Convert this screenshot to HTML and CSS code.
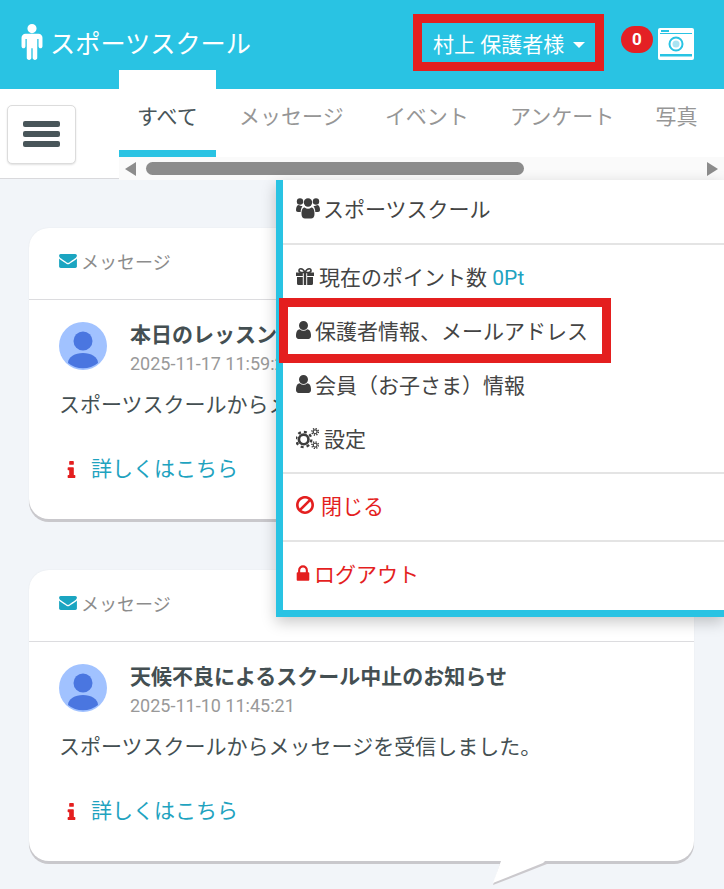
FILE: index.html
```html
<html>
<head>
    <title>スポーツスクール</title>
    <meta charset="utf-8">
    <link rel="stylesheet" href="styles.css">
</head>
<body>
    <svg class="defs" width="0" height="0">
        <symbol id="i-user" viewBox="256 128 1280 1536"><path d="M1536 1399q0 109-62.5 187t-150.5 78h-854q-88 0-150.5-78t-62.5-187q0-85 8.5-160.5t31.5-152 58.5-131 94-89 134.5-34.5q131 128 313 128t313-128q76 0 134.5 34.5t94 89 58.5 131 31.5 152 8.5 160.5zm-256-887q0 159-112.5 271.5t-271.5 112.5-271.5-112.5-112.5-271.5 112.5-271.5 271.5-112.5 271.5 112.5 112.5 271.5z"/></symbol>
        <symbol id="i-mail" viewBox="0 256 1792 1408"><path d="M1792 710v794q0 66-47 113t-113 47h-1472q-66 0-113-47t-47-113v-794q44 49 101 87 362 246 497 345 57 42 92.5 65.5t94.5 48 110 24.5h2q51 0 110-24.5t94.5-48 92.5-65.5q170-123 498-345 57-39 100-87zm0-294q0 79-49 151t-122 123q-376 261-468 325-10 7-42.5 30.5t-54 38-52 32.5-57.5 27-50 9h-2q-23 0-50-9t-57.5-27-52-32.5-54-38-42.5-30.5q-91-64-262-182.5t-205-142.5q-62-42-117-115.5t-55-136.5q0-78 41.5-130t118.5-52h1472q65 0 112.5 47t47.5 113z"/></symbol>
        <symbol id="i-info" viewBox="576 128 640 1408"><path d="M1216 1344v128q0 26-19 45t-45 19h-512q-26 0-45-19t-19-45v-128q0-26 19-45t45-19h64v-384h-64q-26 0-45-19t-19-45v-128q0-26 19-45t45-19h384q26 0 45 19t19 45v576h64q26 0 45 19t19 45zm-128-1152v192q0 26-19 45t-45 19h-256q-26 0-45-19t-19-45v-192q0-26 19-45t45-19h256q26 0 45 19t19 45z"/></symbol>
    </svg>

    <div class="topbar">
        <div class="brand">
            <svg class="brand-icon" viewBox="128 32 1024 1760"><path d="M1152 704v416q0 40-28 68t-68 28-68-28-28-68v-352h-64v912q0 46-33 79t-79 33-79-33-33-79v-464h-64v464q0 46-33 79t-79 33-79-33-33-79v-912h-64v352q0 40-28 68t-68 28-68-28-28-68v-416q0-80 56-136t136-56h640q80 0 136 56t56 136zm-288-448q0 93-65.5 158.5t-158.5 65.5-158.5-65.5-65.5-158.5 65.5-158.5 158.5-65.5 158.5 65.5 65.5 158.5z"/></svg>
            <span>スポーツスクール</span>
        </div>
        <div class="user-btn">村上 保護者様<span class="caret"></span></div>
        <div class="badge">0</div>
        <svg class="camera" viewBox="0 0 36 32">
            <rect x="0" y="0" width="36" height="32" rx="2" fill="#fff"/>
            <rect x="3" y="2" width="8" height="2" fill="#29c3e3"/>
            <rect x="2" y="5" width="32" height="1" fill="#29c3e3"/>
            <circle cx="18" cy="16" r="6.500" fill="none" stroke="#29c3e3" stroke-width="2"/>
            <circle cx="18" cy="16" r="3.500" fill="#a9e4f2"/>
            <rect x="2" y="26" width="32" height="2.500" fill="#29c3e3"/>
        </svg>
    </div>

    <div class="subnav">
        <div class="side">
            <div class="ham"><i></i><i></i><i></i></div>
        </div>
        <div class="tab-area">
            <div class="tabs">
                <a class="tab active">すべて</a>
                <a class="tab">メッセージ</a>
                <a class="tab">イベント</a>
                <a class="tab">アンケート</a>
                <a class="tab">写真</a>
            </div>
            <div class="scroll">
                <span class="arrow left"></span>
                <span class="track"><span class="thumb"></span></span>
                <span class="arrow right"></span>
            </div>
        </div>
    </div>

    <div class="main">
        <div class="card">
            <div class="card-head"><svg class="ic-mail"><use href="#i-mail"/></svg>メッセージ</div>
            <div class="card-body">
                <div class="who">
                    <svg class="avatar" viewBox="0 0 48 48">
                        <circle cx="24" cy="24" r="24" fill="#a1c2ff"/>
                        <circle cx="24" cy="19" r="9.5" fill="#4a76e0"/>
                        <path d="M9 41c0-6 7-10 15-10s15 4 15 10a24 24 0 0 1-30 0z" fill="#4a76e0"/>
                    </svg>
                    <div>
                        <div class="title">本日のレッスンについてのお知らせ</div>
                        <div class="date">2025-11-17 11:59:21</div>
                    </div>
                </div>
                <p class="text">スポーツスクールからメッセージを受信しました。</p>
                <a class="more"><svg class="ic-info"><use href="#i-info"/></svg>詳しくはこちら</a>
            </div>
        </div>
        <div class="card">
            <div class="card-head"><svg class="ic-mail"><use href="#i-mail"/></svg>メッセージ</div>
            <div class="card-body">
                <div class="who">
                    <svg class="avatar" viewBox="0 0 48 48">
                        <circle cx="24" cy="24" r="24" fill="#a1c2ff"/>
                        <circle cx="24" cy="19" r="9.5" fill="#4a76e0"/>
                        <path d="M9 41c0-6 7-10 15-10s15 4 15 10a24 24 0 0 1-30 0z" fill="#4a76e0"/>
                    </svg>
                    <div>
                        <div class="title">天候不良によるスクール中止のお知らせ</div>
                        <div class="date">2025-11-10 11:45:21</div>
                    </div>
                </div>
                <p class="text">スポーツスクールからメッセージを受信しました。</p>
                <a class="more"><svg class="ic-info"><use href="#i-info"/></svg>詳しくはこちら</a>
            </div>
            <svg class="tail" width="60" height="26" viewBox="0 0 60 26">
                <path d="M8 0L0 24L54 3L52 0z" fill="#cbc9cd"/>
                <path d="M8 0L0 22L50 2L52 0z" fill="#fff"/>
            </svg>
        </div>
    </div>

    <div class="menu">
        <div class="group first">
            <div class="row">
                <svg class="ic ic-users" viewBox="0 0 24 22">
                    <circle cx="12" cy="5.500" r="4.200"/><circle cx="4" cy="4.500" r="3.200"/><circle cx="20" cy="4.500" r="3.200"/>
                    <path d="M0 13c0-3 1-5 3-5 1 .8 2 1 3.500 1-1 1.500-1.800 3.500-1.800 6H2c-1.300 0-2-.7-2-2zM24 13c0-3-1-5-3-5-1 .8-2 1-3.500 1 1 1.500 1.800 3.500 1.800 6H22c1.300 0 2-.7 2-2z"/>
                    <path d="M5.500 17c0-4 1-6.500 3.200-6.500 1 .8 2.100 1.200 3.300 1.200s2.300-.4 3.300-1.200c2.200 0 3.200 2.500 3.200 6.500 0 3-1.500 4.500-3.500 4.500H9c-2 0-3.500-1.500-3.500-4.500z"/>
                </svg>
                <span>スポーツスクール</span>
            </div>
        </div>
        <div class="group">
            <div class="row">
                <svg class="ic ic-gift" viewBox="0 0 18 17">
                    <path d="M0 4.500h6.800V8H0zM11.200 4.500H18V8h-6.800zM7.800 4.500h2.400V17H7.800zM1 9h5.800v8H2.500C1.500 17 1 16.300 1 15.500zM11.200 9H17v6.500c0 .8-.5 1.500-1.500 1.500h-4.300z"/>
                    <path class="bow" d="M9 4.500C7.500 1.500 6 .8 4.800.8 3.600.8 3 1.600 3 2.600s1 1.900 2.400 1.900zM9 4.500c1.500-3 3-3.700 4.200-3.700 1.200 0 1.800.8 1.800 1.800s-1 1.900-2.400 1.900z"/>
                </svg>
                <span>現在のポイント数 <b class="pt">0Pt</b></span>
            </div>
            <div class="row marked">
                <svg class="ic ic-user"><use href="#i-user"/></svg>
                <span>保護者情報、メールアドレス</span>
                <div class="mark"></div>
            </div>
            <div class="row">
                <svg class="ic ic-user"><use href="#i-user"/></svg>
                <span>会員（お子さま）情報</span>
            </div>
            <div class="row">
                <svg class="ic ic-cogs" viewBox="0 0 24 22">
                    <circle cx="8" cy="12" r="8" stroke-width="2.400" stroke-dasharray="3.100 3.180"/>
                    <circle cx="8" cy="12" r="5" stroke-width="2.800"/>
                    <circle cx="20" cy="4" r="3.400" stroke-width="1.600" stroke-dasharray="1.300 1.370"/>
                    <circle cx="20" cy="4" r="2" stroke-width="1.200"/>
                    <circle cx="20" cy="18" r="3.400" stroke-width="1.600" stroke-dasharray="1.300 1.370"/>
                    <circle cx="20" cy="18" r="2" stroke-width="1.200"/>
                </svg>
                <span>設定</span>
            </div>
        </div>
        <div class="group thin">
            <div class="row red">
                <svg class="ic ic-ban" viewBox="128 128 1536 1536"><path d="M1440 893q0-161-87-295l-754 753q137 89 297 89 111 0 211.500-43.500t173.500-116.500 116-174.500 43-212.500zm-999 299l755-754q-135-91-300-91-148 0-273 73t-198 199-73 274q0 162 89 299zm1223-299q0 157-61 300t-163.500 246-245 164-298.500 61-298.500-61-245-164-163.500-246-61-300 61-299.500 163.500-245.500 245-164 298.500-61 298.500 61 245 164 163.500 245.500 61 299.500z"/></svg>
                <span>閉じる</span>
            </div>
        </div>
        <div class="group last">
            <div class="row red">
                <svg class="ic ic-lock" viewBox="256 128 1280 1408"><path d="M640 768h512v-192q0-106-75-181t-181-75-181 75-75 181v192zm832 96v576q0 40-28 68t-68 28h-960q-40 0-68-28t-28-68v-576q0-40 28-68t68-28h32v-192q0-184 132-316t316-132 316 132 132 316v192h32q40 0 68 28t28 68z"/></svg>
                <span>ログアウト</span>
            </div>
        </div>
    </div>
</body>
</html>
```

FILE: styles.css
```css
html, body {
    margin: 0;
    padding: 0;
    height: 889px;
    overflow: hidden;
}

body {
    position: relative;
    background-color: #f2f5f9;
    font-family: Roboto, "Noto Sans CJK JP", sans-serif;
    font-size: 21px;
    color: #444f52;
}

.defs {
    display: block;
    height: 0;
}

/* top bar */
.topbar {
    display: flex;
    align-items: flex-start;
    height: 89px;
    background-color: #29c3e3;
    color: #fff;
}

.brand {
    display: flex;
    align-items: center;
    width: 413px;
    height: 89px;
    padding: 0 0 5px 21px;
    box-sizing: border-box;
    font-size: 25.200px;
}

.brand-icon {
    width: 22px;
    height: 36px;
    margin-right: 7px;
    fill: #fff;
}

.user-btn {
    display: flex;
    align-items: center;
    box-sizing: border-box;
    width: 191px;
    height: 57px;
    margin-top: 14px;
    padding-left: 11px;
    border: 9px solid #e41f1f;
    white-space: nowrap;
}

.caret {
    margin: 4px 0 0 9px;
    border-top: 6px solid #fff;
    border-left: 6px solid transparent;
    border-right: 6px solid transparent;
}

.badge {
    width: 32px;
    height: 27px;
    margin: 26px 0 0 17px;
    border-radius: 14px;
    background-color: #e42024;
    font-size: 17px;
    font-weight: bold;
    line-height: 27px;
    text-align: center;
}

.camera {
    width: 36px;
    height: 32px;
    margin: 28px 0 0 5px;
}

/* tabs */
.subnav {
    display: flex;
    align-items: flex-start;
}

.side {
    width: 119px;
    height: 90px;
    box-sizing: border-box;
    padding: 16px 0 0 7px;
    background-color: #fff;
    border-bottom: 1px solid #d9d9dc;
}

.ham {
    display: flex;
    flex-direction: column;
    gap: 4px;
    box-sizing: border-box;
    width: 69px;
    height: 59px;
    padding: 15px 15px;
    background-color: #fff;
    border: 1px solid #dcdcdc;
    border-radius: 5px;
    box-shadow: 0 1px 2px rgba(0, 0, 0, .12);
}

.ham i {
    display: block;
    height: 6px;
    border-radius: 2px;
    background-color: #485559;
}

.tab-area {
    flex: 1;
    min-width: 0;
}

.tabs {
    display: flex;
    height: 68px;
    background-color: #fff;
    white-space: nowrap;
}

.tab {
    padding: 13px 20.600px 0;
    color: #969696;
    line-height: 30px;
}

.tab.active {
    width: 97px;
    box-sizing: border-box;
    height: 87px;
    margin: -19px 2.500px 0 0;
    padding: 32px 0 0 18px;
    background-color: #fff;
    border-bottom: 7px solid #29c3e3;
    color: #485559;
}

.scroll {
    display: flex;
    align-items: center;
    height: 23px;
    background-color: #fafafa;
}

.arrow {
    width: 0;
    height: 0;
    border-top: 7px solid transparent;
    border-bottom: 7px solid transparent;
}

.arrow.left {
    margin-left: 6px;
    border-right: 11px solid #8c8c8c;
}

.arrow.right {
    margin-right: 6px;
    border-left: 11px solid #8c8c8c;
}

.track {
    flex: 1;
    padding: 0 183px 0 10px;
}

.thumb {
    display: block;
    height: 13px;
    border-radius: 7px;
    background-color: #8c8c8c;
}

/* message cards */
.main {
    padding: 48px 30px 0 29px;
}

.card {
    position: relative;
    height: 291px;
    margin-bottom: 51px;
    background-color: #fff;
    border-radius: 20px;
    box-shadow: 0 3px 0 #c9c8cc, 0 0 2px rgba(0, 0, 0, .06);
}

.card-head {
    display: flex;
    align-items: center;
    height: 72px;
    padding: 0 30px 6px;
    box-sizing: border-box;
    border-bottom: 1px solid #dcdcdf;
    color: #8c8c8c;
    font-size: 18px;
}

.ic-mail {
    width: 18px;
    height: 14px;
    margin-right: 4px;
    fill: #1ba5c1;
}

.card-body {
    padding: 22px 30px 0;
}

.who {
    display: flex;
    align-items: flex-start;
}

.avatar {
    width: 48px;
    height: 48px;
    margin-right: 23px;
}

.title {
    margin-top: -2px;
    font-weight: bold;
    line-height: 30px;
    white-space: nowrap;
}

.date {
    margin-top: 2px;
    color: #999;
    font-size: 18px;
    line-height: 24px;
}

.text {
    margin: 14px 0 0;
    line-height: 30px;
    white-space: nowrap;
}

.more {
    display: flex;
    align-items: center;
    margin-top: 34px;
    color: #1fa3bf;
    line-height: 30px;
}

.ic-info {
    width: 9px;
    height: 17px;
    margin: 0 15px 0 8px;
    fill: #e41f1f;
}

.tail {
    position: absolute;
    left: 464px;
    bottom: -26px;
}

/* drop-down menu */
.menu {
    position: absolute;
    top: 180px;
    left: 276px;
    right: 0;
    background-color: #fff;
    border-left: 7px solid #29c3e3;
    border-bottom: 7px solid #29c3e3;
    box-shadow: 0 5px 14px rgba(0, 0, 0, .22);
    color: #444;
}

.group {
    padding: 5px 0 6px;
    border-bottom: 2px solid #e4e4e4;
}

.group.first {
    padding: 2px 0 7px;
}

.group.thin {
    padding: 6px 0;
}

.group.last {
    padding: 6px 0 8px;
    border-bottom: 0;
}

.row {
    position: relative;
    display: flex;
    align-items: center;
    box-sizing: border-box;
    height: 54px;
    padding: 0 0 2px 13px;
    white-space: nowrap;
}

.row.red {
    padding-bottom: 4px;
    color: #e41f1f;
}

.pt {
    color: #1fa3bf;
    font-weight: normal;
}

.ic {
    flex: none;
    margin-right: 3px;
    fill: #3d3d3d;
}

.ic-users {
    width: 24px;
    height: 22px;
}

.ic-gift {
    width: 18px;
    height: 17px;
    margin-right: 5px;
}

.ic-gift .bow {
    fill: none;
    stroke: #3d3d3d;
    stroke-width: 1.600;
}

.ic-user {
    width: 15px;
    height: 18px;
    margin-right: 4px;
}

.ic-cogs {
    width: 23px;
    height: 21px;
    margin-right: 5px;
    fill: none;
    stroke: #3d3d3d;
}

.ic-ban {
    width: 18px;
    height: 18px;
    margin-right: 7px;
    fill: #e41f1f;
}

.ic-lock {
    width: 14px;
    height: 16px;
    margin-right: 4px;
    fill: #e41f1f;
}

.mark {
    position: absolute;
    top: -6px;
    left: -4px;
    width: 332px;
    height: 65px;
    box-sizing: border-box;
    border: 9px solid #e41f1f;
}
```
